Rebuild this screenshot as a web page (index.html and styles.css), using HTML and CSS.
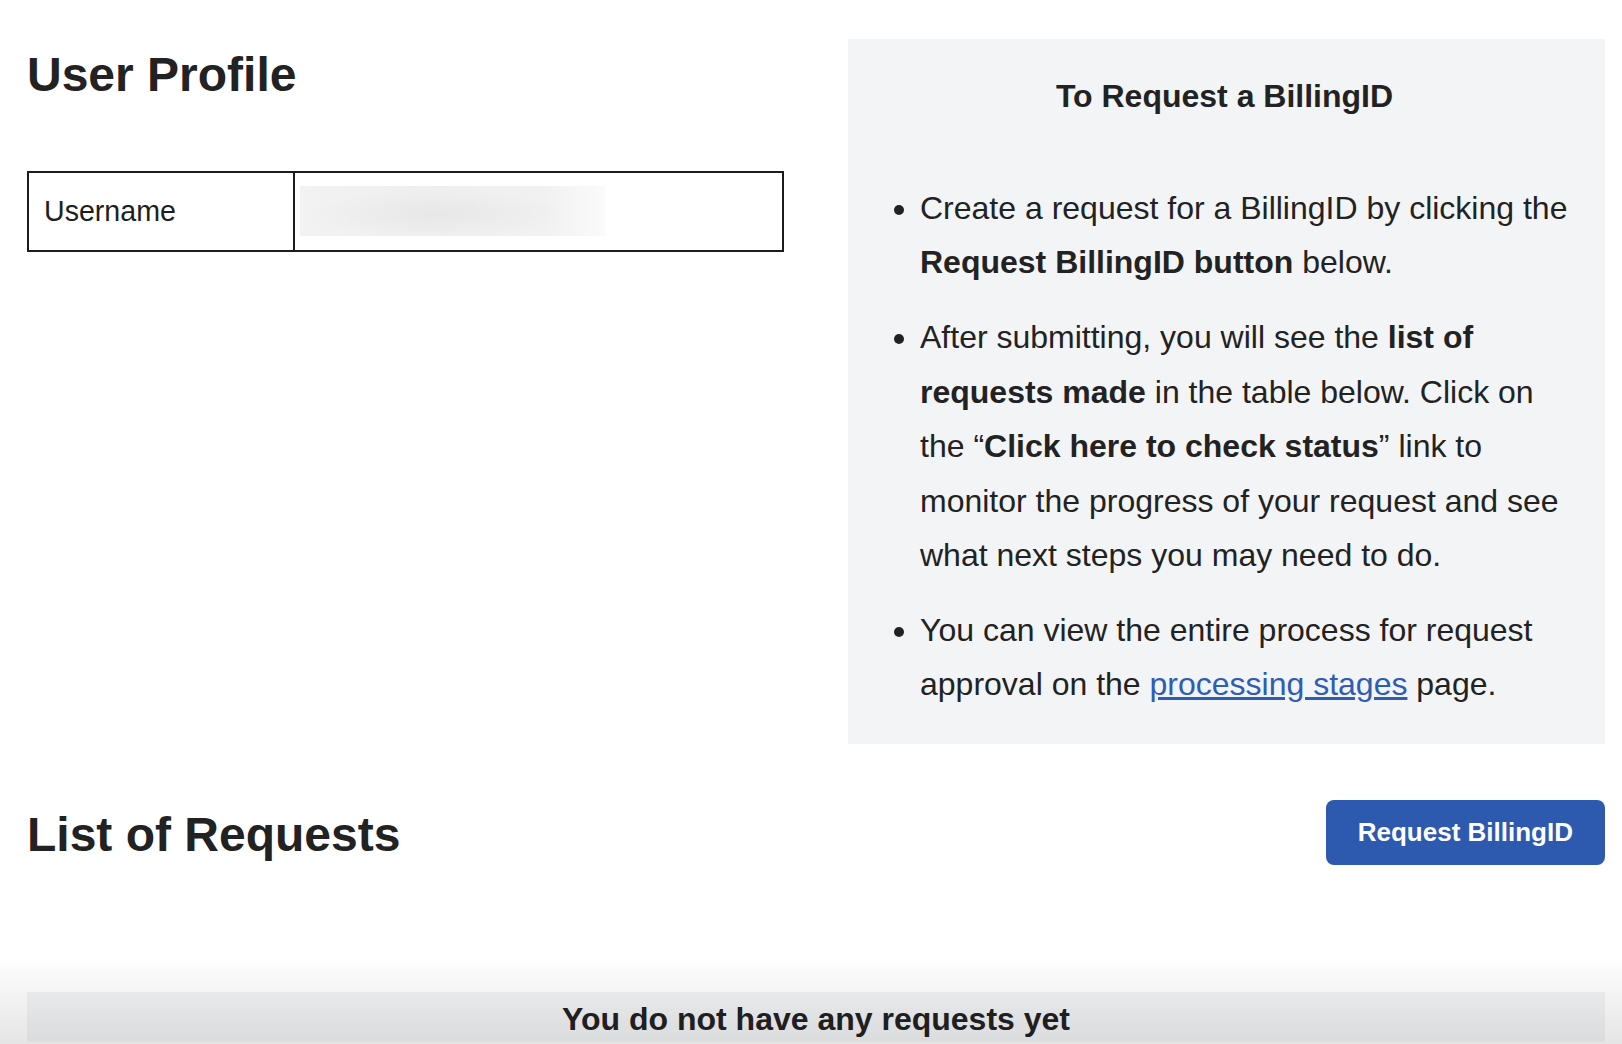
FILE: index.html
```html
<!DOCTYPE html>
<html lang="en">
<head>
<meta charset="utf-8">
<title>User Profile</title>
<link rel="stylesheet" href="styles.css">
</head>
<body>
<div class="page">
  <div class="top">
    <section class="profile">
      <h1 class="title">User Profile</h1>
      <div class="profile-row">
        <div class="label">Username</div>
        <div class="value"><div class="redacted"></div></div>
      </div>
    </section>
    <aside class="info">
      <h2 class="info-title">To Request a BillingID</h2>
      <ul class="info-list">
        <li>Create a request for a BillingID by clicking the <strong>Request BillingID button</strong> below.</li>
        <li>After submitting, you will see the <strong>list of requests made</strong> in the table below. Click on the “<strong>Click here to check status</strong>” link to monitor the progress of your request and see what next steps you may need to do.</li>
        <li>You can view the entire process for request approval on the <a href="#" class="link">processing stages</a> page.</li>
      </ul>
    </aside>
  </div>
  <div class="requests-head">
    <h2 class="title title-row">List of Requests</h2>
    <button class="btn" type="button">Request BillingID</button>
  </div>
  <div class="empty">You do not have any requests yet</div>
</div>
<div class="bottom-fade"></div>
</body>
</html>
```
FILE: styles.css
```css
html, body {
  margin: 0;
  background: #fff;
}
body {
  font-family: "Liberation Sans", Arial, Helvetica, sans-serif;
  color: #222;
  overflow: hidden;
}
.page {
  padding: 39px 17px 0 27px;
}
.top {
  display: grid;
  grid-template-columns: 1fr 1fr;
  column-gap: 64px;
  align-items: start;
}
.title {
  font-size: 48px;
  line-height: 57.6px;
  font-weight: 700;
  margin: 7px 0 0;
  color: #222;
}
.title-row {
  margin: 4px 0 0;
}
.profile-row {
  margin-top: 67px;
  display: grid;
  grid-template-columns: 266px 1fr;
  height: 81px;
  box-sizing: border-box;
  border: 2px solid #1c1c1c;
}
.label {
  display: flex;
  align-items: center;
  padding-left: 15px;
  border-right: 2px solid #1c1c1c;
  font-size: 28.6px;
  color: #1e1e1e;
}
.value {
  display: flex;
  align-items: center;
  padding-left: 5px;
}
.redacted {
  width: 306px;
  height: 50px;
  background:
    radial-gradient(ellipse 60% 70% at 45% 55%, rgba(225,225,225,0.55), rgba(240,240,240,0) 70%),
    linear-gradient(to right, #f2f2f2 0%, #efefef 40%, #f1f1f1 80%, #fbfbfb 100%);
}
.info {
  background: #f3f4f6;
  padding: 38px 28px 32px 24px;
}
.info-title {
  margin: 0;
  font-size: 32px;
  line-height: 38px;
  font-weight: 700;
  text-align: center;
  color: #222;
}
.info-list {
  margin: 66px 0 0;
  padding-left: 48px;
  font-size: 32px;
  line-height: 54.4px;
  color: #222;
}
.info-list li + li {
  margin-top: 20.6px;
}
.info-list strong {
  font-weight: 700;
}
.link {
  color: #2f5cb4;
  text-decoration: underline;
}
.requests-head {
  margin-top: 56px;
  display: flex;
  justify-content: space-between;
  align-items: center;
}
.btn {
  height: 65px;
  padding: 0 32px;
  border: none;
  border-radius: 8px;
  background: #2d5aae;
  color: #fff;
  font-family: "Liberation Sans", Arial, Helvetica, sans-serif;
  font-size: 26px;
  font-weight: 700;
}
.empty {
  margin-top: 127px;
  background: #f3f4f6;
  text-align: center;
  font-size: 32px;
  font-weight: 700;
  line-height: 38px;
  padding: 8px 0 4px;
  color: #222;
}
.bottom-fade {
  position: fixed;
  left: 0;
  right: 0;
  bottom: 0;
  height: 88px;
  background: linear-gradient(to bottom, rgba(0,0,0,0), rgba(0,0,0,0.1));
  pointer-events: none;
}
```
